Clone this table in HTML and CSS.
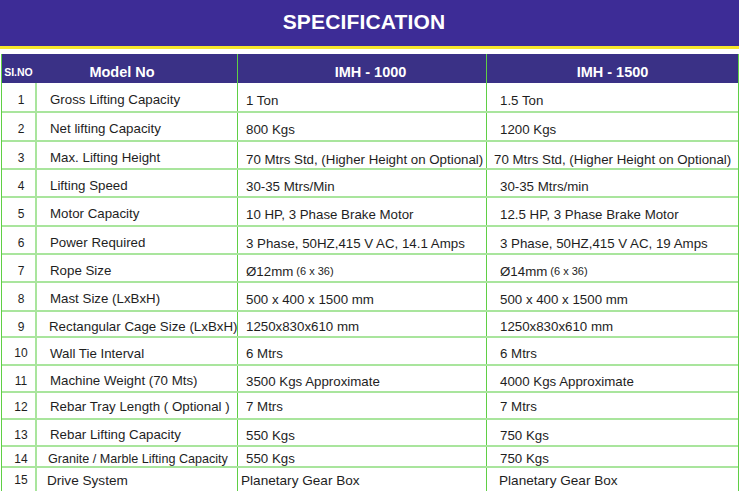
FILE: index.html
```html
<!DOCTYPE html>
<html lang="en">
<head>
<meta charset="utf-8">
<title>Specification</title>
<link rel="stylesheet" href="styles.css">
</head>
<body>
<header class="banner"><h1 class="title">SPECIFICATION</h1></header>
<div class="stripe"></div>
<div class="spec">
  <div class="row head">
    <div class="c num">SI.NO</div>
    <div class="c label">Model No</div>
    <div class="c v1">IMH - 1000</div>
    <div class="c v2">IMH - 1500</div>
  </div>
  <div class="row r1"><div class="c num">1</div><div class="c label">Gross Lifting Capacity</div><div class="c v1">1 Ton</div><div class="c v2">1.5 Ton</div></div>
  <div class="row r2"><div class="c num">2</div><div class="c label">Net lifting Capacity</div><div class="c v1">800 Kgs</div><div class="c v2">1200 Kgs</div></div>
  <div class="row r3"><div class="c num">3</div><div class="c label">Max. Lifting Height</div><div class="c v1">70 Mtrs Std, (Higher Height on Optional)</div><div class="c v2 tight">70 Mtrs Std, (Higher Height on Optional)</div></div>
  <div class="row r4"><div class="c num">4</div><div class="c label">Lifting Speed</div><div class="c v1">30-35 Mtrs/Min</div><div class="c v2">30-35 Mtrs/min</div></div>
  <div class="row r5"><div class="c num">5</div><div class="c label">Motor Capacity</div><div class="c v1">10 HP, 3 Phase Brake Motor</div><div class="c v2">12.5 HP, 3 Phase Brake Motor</div></div>
  <div class="row r6"><div class="c num">6</div><div class="c label">Power Required</div><div class="c v1">3 Phase, 50HZ,415 V AC, 14.1 Amps</div><div class="c v2">3 Phase, 50HZ,415 V AC, 19 Amps</div></div>
  <div class="row r7"><div class="c num">7</div><div class="c label">Rope Size</div><div class="c v1">&Oslash;12mm <span class="small">(6 x 36)</span></div><div class="c v2">&Oslash;14mm <span class="small">(6 x 36)</span></div></div>
  <div class="row r8"><div class="c num">8</div><div class="c label">Mast Size (LxBxH)</div><div class="c v1">500 x 400 x 1500 mm</div><div class="c v2">500 x 400 x 1500 mm</div></div>
  <div class="row r9"><div class="c num">9</div><div class="c label wide">Rectangular Cage Size (LxBxH)</div><div class="c v1">1250x830x610 mm</div><div class="c v2">1250x830x610 mm</div></div>
  <div class="row r10"><div class="c num">10</div><div class="c label">Wall Tie Interval</div><div class="c v1">6 Mtrs</div><div class="c v2">6 Mtrs</div></div>
  <div class="row r11"><div class="c num">11</div><div class="c label">Machine Weight (70 Mts)</div><div class="c v1">3500 Kgs Approximate</div><div class="c v2">4000 Kgs Approximate</div></div>
  <div class="row r12"><div class="c num">12</div><div class="c label">Rebar Tray Length ( Optional )</div><div class="c v1">7 Mtrs</div><div class="c v2">7 Mtrs</div></div>
  <div class="row r13"><div class="c num">13</div><div class="c label">Rebar Lifting Capacity</div><div class="c v1">550 Kgs</div><div class="c v2">750 Kgs</div></div>
  <div class="row r14"><div class="c num">14</div><div class="c label narrow">Granite / Marble Lifting Capacity</div><div class="c v1">550 Kgs</div><div class="c v2">750 Kgs</div></div>
  <div class="row r15"><div class="c num">15</div><div class="c label last">Drive System</div><div class="c v1 last">Planetary Gear Box</div><div class="c v2 last">Planetary Gear Box</div></div>
</div>
</body>
</html>
```

FILE: styles.css
```css
* { box-sizing: border-box; }

html, body {
  margin: 0;
  padding: 0;
  background: #ffffff;
}

body {
  font-family: "Liberation Sans", Arial, sans-serif;
  color: #1e1e1e;
  overflow: hidden;
}

.banner {
  height: 46px;
  background: #3d2c96;
  display: flex;
  align-items: center;
  justify-content: center;
}

.title {
  margin: 0;
  padding-bottom: 2px;
  padding-right: 11px;
  font-size: 21px;
  font-weight: bold;
  color: #ffffff;
  letter-spacing: 0.15px;
}

.stripe {
  height: 3px;
  background: #f6e62b;
  margin-bottom: 5px;
}

.spec {
  margin-left: 1px;
  width: 738px;
  border-left: 1px solid #5fcf45;
  border-right: 1px solid #5fcf45;
}

.row {
  display: grid;
  grid-template-columns: 35px 201px 249px 1fr;
  border-bottom: 2px solid #a9e59d;
  font-size: 13.3px;
}

.c {
  display: flex;
  align-items: center;
  white-space: nowrap;
  overflow: visible;
}

.num {
  justify-content: center;
  font-size: 12px;
  padding-top: 5px;
  padding-left: 5px;
  border-right: 2px solid #a9e59d;
}

.label {
  padding-left: 13px;
  padding-top: 4px;
  border-right: 1px solid #5fcf45;
}

.v1 {
  padding-left: 8px;
  padding-top: 6px;
  border-right: 1px solid #5fcf45;
}

.v2 {
  padding-left: 13px;
  padding-top: 6px;
}

.v2.tight { padding-left: 7px; }

.label.wide { padding-left: 12px; }
.label.narrow { padding-left: 11px; font-size: 12.6px; }
.label.last { padding-left: 10px; font-size: 13.6px; }
.v1.last { padding-left: 3px; font-size: 13.6px; }
.v2.last { padding-left: 12px; font-size: 13.6px; }

.small { font-size: 11px; margin-left: 3px; }

.head {
  height: 29px;
  background: #3a3186;
  border-bottom: none;
  color: #ffffff;
  font-weight: bold;
  font-size: 14.5px;
}

.head .c {
  justify-content: center;
  padding-top: 7px;
  padding-left: 0;
  border-right-color: #5fcf45;
}

.head .num {
  font-size: 10.5px;
  padding-left: 0;
  padding-top: 6px;
  border-right: 2px solid #3a3186;
}

.head .label { padding-right: 30px; }
.head .v1 { padding-left: 17px; }
.head .v2 { padding-left: 0; }

.r1 { height: 30px; }
.r2 { height: 29px; }
.r3 { height: 28px; }
.r3 .v1, .r3 .v2 { padding-top: 9px; }
.r4 { height: 28px; }
.r5 { height: 29px; }
.r6 { height: 28px; }
.r7 { height: 28px; }
.r8 { height: 29px; }
.r9 { height: 26px; }
.r9 .v1, .r9 .v2 { padding-top: 4px; }
.r10 { height: 28px; }
.r10 .c { padding-top: 4px; }
.r11 { height: 27px; }
.r12 { height: 27px; }
.r12 .c { padding-top: 2px; }
.r13 { height: 27px; }
.r14 { height: 21px; }
.r14 .c { padding-top: 4px; }
.r15 { height: 25px; border-bottom: none; }
.r15 .c { padding-top: 0; padding-bottom: 1px; }
```
